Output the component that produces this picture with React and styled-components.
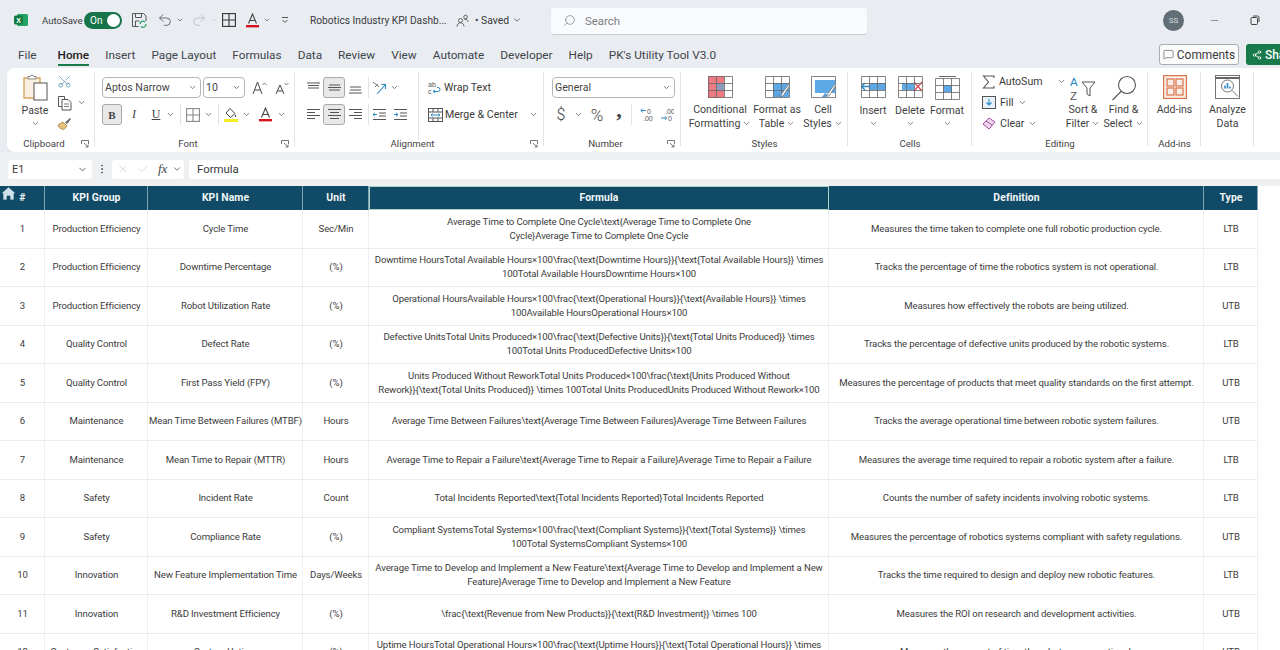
import styled, { createGlobalStyle } from "styled-components";
import { ChevronDown, Search, Scissors, Undo2, Redo2, X, Check, Minus, MessageSquare, Share2, MoreVertical } from "lucide-react";

const rows = [
  ["1", "Production Efficiency", "Cycle Time", "Sec/Min", String.raw`Average Time to Complete One Cycle\text{Average Time to Complete One
Cycle}Average Time to Complete One Cycle`, "Measures the time taken to complete one full robotic production cycle.", "LTB"],
  ["2", "Production Efficiency", "Downtime Percentage", "(%)", String.raw`Downtime HoursTotal Available Hours×100\frac{\text{Downtime Hours}}{\text{Total Available Hours}} \times
100Total Available HoursDowntime Hours×100`, "Tracks the percentage of time the robotics system is not operational.", "LTB"],
  ["3", "Production Efficiency", "Robot Utilization Rate", "(%)", String.raw`Operational HoursAvailable Hours×100\frac{\text{Operational Hours}}{\text{Available Hours}} \times
100Available HoursOperational Hours×100`, "Measures how effectively the robots are being utilized.", "UTB"],
  ["4", "Quality Control", "Defect Rate", "(%)", String.raw`Defective UnitsTotal Units Produced×100\frac{\text{Defective Units}}{\text{Total Units Produced}} \times
100Total Units ProducedDefective Units×100`, "Tracks the percentage of defective units produced by the robotic systems.", "LTB"],
  ["5", "Quality Control", "First Pass Yield (FPY)", "(%)", String.raw`Units Produced Without ReworkTotal Units Produced×100\frac{\text{Units Produced Without
Rework}}{\text{Total Units Produced}} \times 100Total Units ProducedUnits Produced Without Rework×100`, "Measures the percentage of products that meet quality standards on the first attempt.", "UTB"],
  ["6", "Maintenance", "Mean Time Between Failures (MTBF)", "Hours", String.raw`Average Time Between Failures\text{Average Time Between Failures}Average Time Between Failures`, "Tracks the average operational time between robotic system failures.", "UTB"],
  ["7", "Maintenance", "Mean Time to Repair (MTTR)", "Hours", String.raw`Average Time to Repair a Failure\text{Average Time to Repair a Failure}Average Time to Repair a Failure`, "Measures the average time required to repair a robotic system after a failure.", "LTB"],
  ["8", "Safety", "Incident Rate", "Count", String.raw`Total Incidents Reported\text{Total Incidents Reported}Total Incidents Reported`, "Counts the number of safety incidents involving robotic systems.", "LTB"],
  ["9", "Safety", "Compliance Rate", "(%)", String.raw`Compliant SystemsTotal Systems×100\frac{\text{Compliant Systems}}{\text{Total Systems}} \times
100Total SystemsCompliant Systems×100`, "Measures the percentage of robotics systems compliant with safety regulations.", "UTB"],
  ["10", "Innovation", "New Feature Implementation Time", "Days/Weeks", String.raw`Average Time to Develop and Implement a New Feature\text{Average Time to Develop and Implement a New
Feature}Average Time to Develop and Implement a New Feature`, "Tracks the time required to design and deploy new robotic features.", "LTB"],
  ["11", "Innovation", "R&D Investment Efficiency", "(%)", String.raw`\frac{\text{Revenue from New Products}}{\text{R&D Investment}} \times 100`, "Measures the ROI on research and development activities.", "UTB"],
  ["12", "Customer Satisfaction", "System Uptime", "(%)", String.raw`Uptime HoursTotal Operational Hours×100\frac{\text{Uptime Hours}}{\text{Total Operational Hours}} \times
100Total Operational HoursUptime Hours×100`, "Measures the amount of time the robots are operational.", "UTB"],
];

const heads = ["#", "KPI Group", "KPI Name", "Unit", "Formula", "Definition", "Type"];

const tabs = ["File", "Home", "Insert", "Page Layout", "Formulas", "Data", "Review", "View", "Automate", "Developer", "Help", "PK's Utility Tool V3.0"];

const Global = createGlobalStyle`
  html, body { margin: 0; height: 650px; overflow: hidden; background: #e9edf2; }
  * { box-sizing: border-box; }
  #root { font-family: Roboto, "Noto Sans", sans-serif; color: #3a3a3a; }
`;

const Page = styled.div`
  width: 1280px;
  height: 650px;
  overflow: hidden;
  display: flex;
  flex-direction: column;
`;

/* title bar */
const TitleBar = styled.div`
  height: 40px;
  display: flex;
  align-items: center;
  padding-left: 14px;
  flex: none;
`;
const AutoSave = styled.span`
  font-size: 9.6px;
  margin-left: 14px;
  width: 42px;
`;
const Toggle = styled.div`
  width: 38px;
  height: 17px;
  border-radius: 9px;
  background: #17744a;
  color: #fff;
  font-size: 10px;
  display: flex;
  align-items: center;
  justify-content: space-between;
  padding: 0 2px 0 6px;
  &::after {
    content: "";
    width: 13px;
    height: 13px;
    border-radius: 50%;
    background: #fff;
  }
`;
const Quick = styled.div`
  display: flex;
  align-items: center;
  margin-left: ${p => p.$left || 0}px;
  color: ${p => p.$dim ? "#b4b8bd" : "#47505a"};
`;
const DocTitle = styled.span`
  font-size: 10.2px;
  margin-left: 21px;
  width: 146px;
  white-space: nowrap;
`;
const Saved = styled.span`
  font-size: 10.4px;
  margin-left: 6px;
  width: 48px;
  display: flex;
  align-items: center;
  gap: 3px;
  white-space: nowrap;
`;
const SearchBox = styled.div`
  width: 316px;
  height: 26px;
  margin-left: 28px;
  margin-top: 2px;
  background: #f9fafb;
  border-radius: 3px;
  box-shadow: 0 1px 1px #c9ccd2;
  display: flex;
  align-items: center;
  padding: 0 0 1px 12px;
  gap: 9px;
  font-size: 11.4px;
  color: #7c7f84;
`;
const Avatar = styled.div`
  width: 21px;
  height: 21px;
  border-radius: 50%;
  background: #616e75;
  color: #d8dcdf;
  font-size: 8px;
  display: flex;
  align-items: center;
  justify-content: center;
  margin-left: auto;
`;
const WinBtn = styled.div`
  margin-left: ${p => p.$left}px;
  display: flex;
  color: #444;
`;

/* tabs */
const TabRow = styled.div`
  height: 28px;
  display: flex;
  align-items: flex-start;
  padding-left: 18px;
  gap: 16px;
  flex: none;
`;
const Tab = styled.span`
  font-size: 11.8px;
  height: 26px;
  line-height: 30px;
  white-space: nowrap;
  color: ${p => p.$active ? "#222" : "#3f444a"};
  font-weight: ${p => p.$active ? 500 : 400};
  margin-left: ${p => p.$active ? 5 : 0}px;
  border-bottom: ${p => p.$active ? "2px solid #1b7a4c" : "none"};
`;
const CommentBtn = styled.div`
  margin: 4px 0 0 auto;
  width: 80px;
  height: 21px;
  border: 1px solid #a9adb3;
  border-radius: 3px;
  background: #fbfbfc;
  display: flex;
  align-items: center;
  justify-content: center;
  gap: 3px;
  font-size: 11.9px;
`;
const ShareBtn = styled.div`
  width: 50px;
  height: 21px;
  margin: 4px -16px 0 -9px;
  background: #187a4a;
  border-radius: 3px;
  color: #fff;
  display: flex;
  align-items: center;
  padding-left: 6px;
  gap: 3px;
  font-size: 11.9px;
  font-weight: 500;
`;

/* ribbon */
const Ribbon = styled.div`
  height: 84px;
  margin-left: 7px;
  background: #fff;
  border-radius: 7px 0 0 7px;
  display: flex;
  flex: none;
  box-shadow: 0 1px 1px #d6d8dc;
`;
const Group = styled.div`
  width: ${p => p.$w}px;
  flex: none;
  position: relative;
  display: grid;
  grid-template-rows: 1fr 16px;
  &::after {
    content: "";
    position: absolute;
    right: 0;
    top: 4px;
    bottom: 6px;
    width: 1px;
    background: #e4e5e7;
  }
`;
const GroupBody = styled.div`
  display: flex;
  padding-left: ${p => p.$left || 0}px;
  min-height: 0;
`;
const GroupFoot = styled.div`
  display: grid;
  grid-template-columns: 1fr auto 1fr;
  align-items: center;
  font-size: 9.7px;
  color: #444;
  padding-bottom: 1px;
  padding-right: ${p => p.$launch ? 14 : 0}px;
`;
const FootLabel = styled.span`
  grid-column: 2;
`;
const Launcher = styled.svg`
  grid-column: 3;
  justify-self: end;
  width: 8px;
  height: 8px;
  margin-right: -8px;
`;
const Stack = styled.div`
  display: flex;
  flex-direction: column;
  align-items: ${p => p.$align || "flex-start"};
  flex: none;
  width: ${p => p.$w ? p.$w + "px" : "auto"};
  gap: ${p => p.$gap || 0}px;
  padding-top: ${p => p.$top || 0}px;
  margin-left: ${p => p.$left || 0}px;
`;
const Line = styled.div`
  display: flex;
  align-items: center;
  height: ${p => p.$h || 21}px;
  gap: ${p => p.$gap || 0}px;
  font-size: 10.6px;
  white-space: nowrap;
`;
const Big = styled.div`
  width: ${p => p.$w}px;
  flex: none;
  display: flex;
  flex-direction: column;
  align-items: center;
  padding-top: ${p => p.$top ?? 8}px;
  font-size: 10.6px;
  line-height: 14px;
  text-align: center;
  color: #3f3f3f;
  white-space: pre;
`;
const BigIcon = styled.div`
  height: ${p => p.$h || 24}px;
  margin-bottom: ${p => p.$gap ?? 3}px;
  display: flex;
  align-items: flex-start;
`;
const Chev = styled(ChevronDown).attrs(p => ({ size: p.$s || 9, strokeWidth: 2 }))`
  color: #555;
  flex: none;
  margin-left: ${p => p.$left || 0}px;
  margin-top: ${p => p.$top || 0}px;
`;
const InlineChev = styled(Chev)`
  vertical-align: -1px;
`;
const Select = styled.div`
  width: ${p => p.$w}px;
  height: 21px;
  border: 1px solid #b5b6b8;
  border-radius: 4px;
  display: flex;
  align-items: center;
  justify-content: space-between;
  padding: 0 3px 0 2px;
  font-size: 10.6px;
  color: #444;
  margin-left: ${p => p.$left || 0}px;
`;
const ToolBtn = styled.div`
  width: ${p => p.$w || 20}px;
  height: 21px;
  border-radius: 3px;
  display: flex;
  align-items: center;
  justify-content: center;
  flex: none;
  margin-left: ${p => p.$left || 0}px;
  padding-bottom: ${p => p.$up || 0}px;
  font-size: ${p => p.$size || 11}px;
  font-family: ${p => p.$sans ? "Roboto, sans-serif" : '"Liberation Serif", serif'};
  font-style: ${p => p.$italic ? "italic" : "normal"};
  font-weight: ${p => p.$bold ? 700 : p.$sans ? 300 : 400};
  text-decoration: ${p => p.$under ? "underline" : "none"};
  background: ${p => p.$on ? "#e8e8e8" : "transparent"};
  border: 1px solid ${p => p.$on ? "#a8a8a8" : "transparent"};
  color: #444;
`;
const VSep = styled.div`
  width: 1px;
  height: ${p => p.$h || 21}px;
  background: ${p => p.$clear ? "transparent" : "#e2e3e5"};
  margin: ${p => p.$top || 0}px ${p => p.$m || 5}px 0;
  flex: none;
`;

/* formula bar */
const FormulaBar = styled.div`
  height: 34px;
  flex: none;
  display: flex;
  align-items: center;
  padding-left: 8px;
  background: #eef0f2;
`;
const NameBox = styled.div`
  width: 84px;
  height: 19px;
  background: #fff;
  border-radius: 3px;
  display: flex;
  align-items: center;
  justify-content: space-between;
  padding: 0 4px;
  font-size: 10.8px;
`;
const Dots = styled.div`
  width: 20px;
  display: flex;
  justify-content: center;
  color: #555;
`;
const FxBox = styled.div`
  width: 72px;
  height: 19px;
  background: #fff;
  border-radius: 3px;
  display: flex;
  align-items: center;
  padding-left: 5px;
  gap: 8px;
  color: #c2c4c7;
`;
const Fx = styled.span`
  font-family: "Liberation Serif", serif;
  font-style: italic;
  font-size: 13px;
  color: #444;
  margin-left: 1px;
`;
const FormulaInput = styled.div`
  flex: 1;
  height: 19px;
  margin-left: 5px;
  background: #fff;
  border-radius: 3px 0 0 3px;
  display: flex;
  align-items: center;
  padding-left: 8px;
  font-size: 11.4px;
`;

/* sheet */
const Sheet = styled.div`
  flex: 1;
  background: #fff;
  position: relative;
  min-height: 0;
  overflow: hidden;
`;
const Row = styled.div`
  display: grid;
  grid-template-columns: 45px 103px 155px 66px 460px 375px 54px;
  width: 1258px;
  height: ${p => p.$h}px;
`;
const HeadCell = styled.div`
  background: #114a66;
  color: #f2f6f8;
  font-size: 10.4px;
  font-weight: 700;
  letter-spacing: 0.1px;
  display: flex;
  align-items: center;
  justify-content: center;
  padding: 0 0 1px 1px;
  border-right: 1px solid #7fa5b8;
  ${p => p.$selected && "outline: 1px solid #a9d3c2; outline-offset: -1px;"}
`;
const Cell = styled.div`
  font-size: 9.6px;
  letter-spacing: -0.13px;
  line-height: 14px;
  color: #3c3c3c;
  display: flex;
  align-items: center;
  justify-content: center;
  text-align: center;
  white-space: pre;
  padding-left: 1px;
  border-right: 1px solid #f0f0f0;
  border-bottom: 1px solid #ececec;
`;
const HomeBadge = styled.svg`
  position: absolute;
  left: 1px;
  top: 1px;
  width: 15px;
  height: 14px;
`;

/* drawings */
const ExcelLogo = () => (
  <svg width="14" height="14" viewBox="0 0 14 14">
    <rect x="3" y="1" width="11" height="12" rx="1.5" fill="#21a366" />
    <rect x="0" y="2.5" width="9" height="9" rx="1.5" fill="#107c41" />
    <text x="2.2" y="9.6" fontSize="7" fontWeight="700" fill="#fff" fontFamily="Liberation Sans">X</text>
  </svg>
);
const SaveIcon = () => (
  <svg width="17" height="17" viewBox="0 0 17 17" fill="none" stroke="#555" strokeWidth="1">
    <path d="M1.5 1.5h11l2.5 2.5v5M1.5 1.5v13h6" />
    <path d="M4.5 1.5v4h6v-4M4.5 14v-5h4" />
    <path d="M9 12a3 3 0 0 1 5-2M15 12a3 3 0 0 1-5 2.5" stroke="#2f9e62" strokeWidth="1.3" />
  </svg>
);
const GridIcon = ({ s = 14, c = "#333" }) => (
  <svg width={s} height={s} viewBox="0 0 14 14" fill="none" stroke={c} strokeWidth="1.1">
    <rect x="0.6" y="0.6" width="12.8" height="12.8" />
    <path d="M7 .6v12.8M.6 7h12.8" />
  </svg>
);
const FontColor = () => (
  <svg width="15" height="15" viewBox="0 0 15 15" fill="none">
    <path d="M3.5 10.5 7.5 1l4 9.5M5 7.5h5" stroke="#444" strokeWidth="1.1" />
    <rect x="1" y="12" width="13" height="2.4" fill="#d3141c" />
  </svg>
);
const Customize = () => (
  <svg width="8" height="8" viewBox="0 0 8 8" fill="none" stroke="#555">
    <path d="M1 1.5h6M1.5 4 4 6.5 6.5 4" />
  </svg>
);
const People = () => (
  <svg width="13" height="13" viewBox="0 0 13 13" fill="none" stroke="#555" strokeWidth=".9">
    <circle cx="4.5" cy="6.5" r="2" /><path d="M1 12.5c0-5 7-5 7 0" />
    <circle cx="9.5" cy="3" r="1.8" /><path d="M8.5 5.5c2-.6 3.5.5 3.5 2.5" />
  </svg>
);
const Restore = () => (
  <svg width="10" height="10" viewBox="0 0 10 10" fill="none" stroke="#444" strokeWidth="1">
    <rect x="1" y="2.5" width="6.5" height="7" rx="1" /><path d="M3 1h4.5A1.5 1.5 0 0 1 9 2.5V7" />
  </svg>
);
const PasteIcon = () => (
  <svg width="26" height="27" viewBox="0 0 26 27" fill="none">
    <path d="M2 4h16v20H2z" fill="#f8f1e2" stroke="#d6a760" strokeWidth="1.4" />
    <path d="M6 5V2.5h2.5a1.5 1.5 0 0 1 3 0H14V5z" fill="#fff" stroke="#888" />
    <rect x="12" y="9" width="13" height="17" fill="#fff" stroke="#555" />
  </svg>
);
const CopyIcon = () => (
  <svg width="16" height="16" viewBox="0 0 16 16" fill="none" stroke="#555">
    <path d="M5 11.5H1.5v-10h6V4" /><path d="M5 4.5h6l3 3v7.5H5z" /><path d="M7 9h5M7 11.5h5" strokeWidth=".8" />
  </svg>
);
const Brush = () => (
  <svg width="15" height="13" viewBox="0 0 15 13" fill="none">
    <path d="M1 8l5-3 4 4-3 3.5C5 12 2 12 1 8z" fill="#e8c27d" stroke="#a07c3e" strokeWidth=".8" />
    <path d="M8 5.5 13 1l1 1-4 5z" fill="#666" />
  </svg>
);
const ABig = ({ small }) => (
  <svg width="15" height="14" viewBox="0 0 15 14" fill="none">
    <path d={small ? "M2 13 6 4l4 9M3.5 10h5" : "M1 13 5.5 1 10 13M2.8 9h5.4"} stroke="#444" strokeWidth="1" />
    <path d={small ? "M10.5 2 12.5 4l2-2" : "M10.5 4l2-2 2 2"} stroke="#555" strokeWidth=".8" />
  </svg>
);
const Fill = () => (
  <svg width="14" height="15" viewBox="0 0 14 15" fill="none">
    <path d="M6 1.5 11 6.5 6.5 10.5 2 6z" stroke="#444" /><path d="M11.5 7.5c1 1.5 1 2.5 0 2.5s-1-1 0-2.5z" fill="#444" />
    <rect y="12" width="14" height="3" fill="#f4ed27" />
  </svg>
);
const Bars = ({ d }) => (
  <svg width="15" height="13" viewBox="0 0 15 13" stroke="#555" strokeWidth="1" fill="none"><path d={d} /></svg>
);
const Orient = () => (
  <svg width="15" height="14" viewBox="0 0 15 14" fill="none">
    <path d="M1 1l6 5M3 6l3-3" stroke="#777" strokeWidth="1" />
    <path d="M5 13 13 4M9.5 3.5H13.5V8" stroke="#2a8ac5" strokeWidth="1.1" />
  </svg>
);
const Indent = ({ out }) => (
  <svg width="15" height="13" viewBox="0 0 15 13" fill="none" stroke="#555">
    <path d="M1 1.5h13M7 5h7M7 8h7M1 11.5h13" />
    <path d={out ? "M5 6.5H1M2.8 4.8 1 6.5l1.8 1.7" : "M1 6.5h4M3.2 4.8 5 6.5 3.2 8.2"} stroke="#2a8ac5" />
  </svg>
);
const WrapIcon = () => (
  <svg width="14" height="14" viewBox="0 0 14 14" fill="none">
    <text x="0" y="6" fontSize="7" fill="#555" fontFamily="Liberation Sans">ab</text>
    <text x="0" y="13" fontSize="7" fill="#555" fontFamily="Liberation Sans">c</text>
    <path d="M5 10.5h5a2 2 0 0 0 0-4H9M7 8.8 5 10.5l2 1.7" stroke="#2a8ac5" />
  </svg>
);
const MergeIcon = () => (
  <svg width="15" height="14" viewBox="0 0 15 14" fill="none" stroke="#555">
    <rect x=".5" y=".5" width="14" height="13" />
    <path d="M.5 4h14M.5 10h14M5 .5V4M10 .5V4M5 10v3.5M10 10v3.5" />
    <path d="M3 7h9M4.5 5.5 3 7l1.5 1.5M10.5 5.5 12 7l-1.5 1.5" stroke="#2a8ac5" />
  </svg>
);
const DecIcon = ({ inc }) => (
  <svg width="14" height="15" viewBox="0 0 14 15" fill="none">
    <text x={inc ? 7 : 5} y="6.5" fontSize="7" fill="#555" fontFamily="Liberation Sans">{inc ? "0" : ".00"}</text>
    <text x={inc ? 3 : 8} y="14" fontSize="7" fill="#555" fontFamily="Liberation Sans">{inc ? ".00" : "0"}</text>
    <path d={inc ? "M6 3.5H1M2.6 1.8.8 3.5l1.8 1.7" : "M1 11h5.5M4.9 9.3 6.7 11l-1.8 1.7"} stroke="#2a8ac5" />
  </svg>
);
const SheetIcon = ({ children }) => (
  <svg width="25" height="22" viewBox="0 0 25 22" fill="none">
    {children}
    <path d="M.5 .5h24v21H.5zM.5 7.5h24M.5 14.5h24M8.5 .5v21M16.5 .5v21" stroke="#666" strokeWidth=".8" />
  </svg>
);
const CondFmt = () => (
  <SheetIcon>
    <path d="M0 0h16v7h-8v7h8v8H0z" fill="#ee7b81" />
    <rect x="8" y="7" width="8" height="7" fill="#8b9bc0" />
  </SheetIcon>
);
const BrushTail = () => (
  <>
    <path d="M15 20l9-12 1 1-7 11z" fill="#fff" stroke="#777" strokeWidth=".8" />
    <path d="M11 21l3-4 3 2-2 2z" fill="#5d9bd5" />
  </>
);
const FmtTable = () => (
  <svg width="25" height="24" viewBox="0 0 25 24" fill="none">
    <rect x="8" y="7" width="16" height="14" fill="#5da8e6" />
    <path d="M.5 .5h24v21H.5zM.5 7.5h24M.5 14.5h24M8.5 .5v21M16.5 .5v21" stroke="#666" strokeWidth=".8" />
    <BrushTail />
  </svg>
);
const CellStyles = () => (
  <svg width="25" height="24" viewBox="0 0 25 24" fill="none">
    <rect x="4" y="4" width="20" height="13" fill="#5da8e6" />
    <path d="M.5 .5h24v21H.5z" stroke="#666" strokeWidth=".8" />
    <BrushTail />
  </svg>
);
const InsertIcon = () => (
  <SheetIcon>
    <rect x="8" y="7" width="17" height="7" fill="#5da8e6" />
    <path d="M8 10.5H0M4 7 .5 10.5 4 14" stroke="#2a8ac5" strokeWidth="1.3" />
  </SheetIcon>
);
const DeleteIcon = () => (
  <SheetIcon>
    <rect x="4" y="7" width="12" height="7" fill="#5da8e6" />
    <path d="M16 6l8 9M24 6l-8 9" stroke="#e2474f" strokeWidth="1.2" />
  </SheetIcon>
);
const FormatIcon = () => (
  <svg width="25" height="24" viewBox="0 0 25 24" fill="none">
    <rect x="8" y="9" width="9" height="7" fill="#5da8e6" />
    <path d="M4 .5h17" stroke="#666" />
    <path d="M.5 2.5h24v21H.5zM.5 9.5h24M.5 16.5h24M8.5 2.5v21M16.5 2.5v21" stroke="#666" strokeWidth=".8" />
  </svg>
);
const Sum = () => (
  <svg width="13" height="14" viewBox="0 0 13 14" fill="none" stroke="#555" strokeWidth="1.1">
    <path d="M12 3V1H1.5l5 6-5 6H12v-2" />
  </svg>
);
const FillDown = () => (
  <svg width="14" height="13" viewBox="0 0 14 13" fill="none">
    <rect x=".5" y=".5" width="13" height="12" stroke="#555" fill="#e8f1fa" />
    <path d="M7 3v6M4.5 6.5 7 9l2.5-2.5" stroke="#2a8ac5" strokeWidth="1.1" />
  </svg>
);
const Eraser = () => (
  <svg width="14" height="13" viewBox="0 0 14 13" fill="none">
    <path d="M1 7l6-6 6 4-6 7z" fill="#f0d7ee" stroke="#a24aa0" />
    <path d="M4 4l6 4" stroke="#a24aa0" />
  </svg>
);
const SortIcon = () => (
  <svg width="26" height="26" viewBox="0 0 26 26" fill="none">
    <text x="0" y="11" fontSize="11.5" fill="#2a8ac5" fontFamily="Liberation Sans">A</text>
    <text x="0" y="25" fontSize="11.5" fill="#555" fontFamily="Liberation Sans">Z</text>
    <path d="M12 7h13l-5 6v8l-3-2v-6z" stroke="#555" />
  </svg>
);
const FindIcon = () => (
  <svg width="26" height="26" viewBox="0 0 26 26" fill="none" stroke="#555" strokeWidth="1.1">
    <circle cx="16" cy="10" r="8.5" /><path d="M10 16.5 1.5 25" />
  </svg>
);
const AddIns = () => (
  <svg width="24" height="24" viewBox="0 0 24 24" fill="#fbeee6" stroke="#d9764a" strokeWidth="1.2">
    <rect x=".6" y=".6" width="22.8" height="22.8" />
    <rect x="4" y="4" width="7" height="7" /><rect x="13" y="4" width="7" height="7" />
    <rect x="4" y="13" width="7" height="7" /><rect x="13" y="13" width="7" height="7" />
  </svg>
);
const Analyze = () => (
  <svg width="25" height="24" viewBox="0 0 25 24" fill="none" stroke="#666" strokeWidth=".9">
    <rect x=".5" y=".5" width="24" height="23" />
    <path d="M.5 3h24" strokeWidth="2" />
    <circle cx="12.5" cy="11" r="6" fill="#fff" />
    <path d="M17 15.5l6 6" />
    <path d="M10 13.5v-3M12.5 13.5V8M15 13.5v-2" stroke="#2a8ac5" strokeWidth="1.6" />
  </svg>
);
const Launch = () => (
  <Launcher viewBox="0 0 8 8" fill="none" stroke="#666" strokeWidth=".9">
    <path d="M.5 4V.5H7.5V4M3 3l4 4M7 4.5V7H4.5" />
  </Launcher>
);

const TOP = "M1 2h13M2 4.5h11M2 7h11";
const MID = "M2 4h11M1 6.5h13M2 9h11";
const BOT = "M2 6h11M2 9h11M1 12h13";
const LEFT = "M1 1.5h13M1 4.5h8M1 7.5h13M1 10.5h8";
const CENTER = "M1 1.5h13M3 4.5h9M1 7.5h13M3 10.5h9";
const RIGHT = "M1 1.5h13M6 4.5h8M1 7.5h13M6 10.5h8";

export default function App() {
  return (
    <Page>
      <Global />
      <TitleBar>
        <ExcelLogo />
        <AutoSave>AutoSave</AutoSave>
        <Toggle>On</Toggle>
        <Quick $left={9}><SaveIcon /></Quick>
        <Quick $left={9}><Undo2 size={16} strokeWidth={1.2} /><Chev $left={3} $s={8} /></Quick>
        <Quick $left={7} $dim><Redo2 size={16} strokeWidth={1.2} /><Chev $left={3} $s={8} style={{ color: "#c4c7cb" }} /></Quick>
        <Quick $left={4}><GridIcon /></Quick>
        <Quick $left={9}><FontColor /><Chev $left={3} $s={8} /></Quick>
        <Quick $left={10}><Customize /></Quick>
        <DocTitle>Robotics Industry KPI Dashb...</DocTitle>
        <People />
        <Saved>• Saved <Chev $s={10} /></Saved>
        <SearchBox><Search size={13} strokeWidth={1.3} style={{ transform: "scaleX(-1)" }} />Search</SearchBox>
        <Avatar>SS</Avatar>
        <WinBtn $left={25}><Minus size={11} strokeWidth={1.2} /></WinBtn>
        <WinBtn $left={30}><Restore /></WinBtn>
        <WinBtn $left={20} />
      </TitleBar>

      <TabRow>
        {tabs.map(t => <Tab key={t} $active={t === "Home"}>{t}</Tab>)}
        <CommentBtn><MessageSquare size={11} strokeWidth={1.2} />Comments</CommentBtn>
        <ShareBtn><Share2 size={10} />Share</ShareBtn>
      </TabRow>

      <Ribbon>
        <Group $w={88}>
          <GroupBody $left={14}>
            <Big $w={28} $top={6}>
              <BigIcon $h={27} $gap={3}><PasteIcon /></BigIcon>
              Paste
              <Chev $top={1} />
            </Big>
            <Stack $left={8} $top={3}>
              <Line><Scissors size={15} strokeWidth={1} color="#3b7ea8" style={{ transform: "rotate(-90deg)" }} /></Line>
              <Line><CopyIcon /><Chev $left={4} /></Line>
              <Line><Brush /></Line>
            </Stack>
          </GroupBody>
          <GroupFoot $launch><FootLabel>Clipboard</FootLabel><Launch /></GroupFoot>
        </Group>

        <Group $w={200}>
          <Stack $left={7} $top={9} $gap={6}>
            <Line>
              <Select $w={99}>Aptos Narrow<Chev /></Select>
              <Select $w={42} $left={2}>10<Chev /></Select>
              <ToolBtn $w={20} $left={4}><ABig /></ToolBtn>
              <ToolBtn $w={20} $left={2}><ABig small /></ToolBtn>
            </Line>
            <Line>
              <ToolBtn $on $bold $size={11}>B</ToolBtn>
              <ToolBtn $italic $left={2} $size={12}>I</ToolBtn>
              <ToolBtn $under $left={2} $size={12}>U</ToolBtn>
              <Chev />
              <VSep />
              <GridIcon c="#8a8a8a" />
              <Chev $left={4} />
              <VSep />
              <Fill />
              <Chev $left={4} />
              <VSep $m={3} $clear />
              <FontColor />
              <Chev $left={4} />
            </Line>
          </Stack>
          <GroupFoot $launch><FootLabel>Font</FootLabel><Launch /></GroupFoot>
        </Group>

        <Group $w={249}>
          <GroupBody $left={8}>
            <Stack $top={9} $gap={6}>
              <Line>
                <ToolBtn><Bars d={TOP} /></ToolBtn>
                <ToolBtn $on $w={22}><Bars d={MID} /></ToolBtn>
                <ToolBtn><Bars d={BOT} /></ToolBtn>
                <VSep $m={3} />
                <Orient /><Chev $left={3} />
              </Line>
              <Line>
                <ToolBtn><Bars d={LEFT} /></ToolBtn>
                <ToolBtn $on $w={22}><Bars d={CENTER} /></ToolBtn>
                <ToolBtn><Bars d={RIGHT} /></ToolBtn>
                <VSep $m={3} />
                <Indent out /><Quick $left={6}><Indent /></Quick>
              </Line>
            </Stack>
            <VSep $h={68} $m={9.5} $top={4} />
            <Stack $top={9} $gap={6}>
              <Line $gap={2}><WrapIcon />Wrap Text</Line>
              <Line $gap={2}><MergeIcon />Merge &amp; Center<Chev $left={9} /></Line>
            </Stack>
          </GroupBody>
          <GroupFoot $launch><FootLabel>Alignment</FootLabel><Launch /></GroupFoot>
        </Group>

        <Group $w={137}>
          <Stack $left={8} $top={9} $gap={6}>
            <Select $w={123}>General<Chev /></Select>
            <Line>
              <ToolBtn $w={18} $size={16} $sans>$</ToolBtn>
              <Chev $left={4} />
              <ToolBtn $w={20} $left={4} $size={17} $sans>%</ToolBtn>
              <ToolBtn $w={16} $left={4} $size={22} $bold $up={9}>,</ToolBtn>
              <VSep $m={4} />
              <ToolBtn $w={18} $left={2}><DecIcon inc /></ToolBtn>
              <ToolBtn $w={20} $left={1}><DecIcon /></ToolBtn>
            </Line>
          </Stack>
          <GroupFoot $launch><FootLabel>Number</FootLabel><Launch /></GroupFoot>
        </Group>

        <Group $w={167}>
          <GroupBody $left={5}>
            <Big $w={68}><BigIcon><CondFmt /></BigIcon>Conditional<span>Formatting<InlineChev $left={2} /></span></Big>
            <Big $w={46}><BigIcon><FmtTable /></BigIcon>Format as<span>Table<InlineChev $left={2} /></span></Big>
            <Big $w={46}><BigIcon><CellStyles /></BigIcon>Cell<span>Styles<InlineChev $left={2} /></span></Big>
          </GroupBody>
          <GroupFoot><FootLabel>Styles</FootLabel></GroupFoot>
        </Group>

        <Group $w={124}>
          <GroupBody $left={7}>
            <Big $w={36}><BigIcon $gap={4}><InsertIcon /></BigIcon>Insert<Chev $top={1} /></Big>
            <Big $w={38}><BigIcon $gap={4}><DeleteIcon /></BigIcon>Delete<Chev $top={1} /></Big>
            <Big $w={36}><BigIcon $gap={4}><FormatIcon /></BigIcon>Format<Chev $top={1} /></Big>
          </GroupBody>
          <GroupFoot><FootLabel>Cells</FootLabel></GroupFoot>
        </Group>

        <Group $w={176}>
          <GroupBody $left={10}>
            <Stack $top={3} $w={79}>
              <Line $gap={4}><Sum />AutoSum<Chev $left={10} /></Line>
              <Line $gap={4}><FillDown />Fill<Chev /></Line>
              <Line $gap={4}><Eraser />Clear<Chev /></Line>
            </Stack>
            <Big $w={44} $top={7}><BigIcon $h={26} $gap={2}><SortIcon /></BigIcon>Sort &amp;<span>Filter<InlineChev $left={2} /></span></Big>
            <Big $w={37} $top={7}><BigIcon $h={26} $gap={2}><FindIcon /></BigIcon>Find &amp;<span>Select<InlineChev $left={2} /></span></Big>
          </GroupBody>
          <GroupFoot><FootLabel>Editing</FootLabel></GroupFoot>
        </Group>

        <Group $w={53}>
          <GroupBody><Big $w={53} $top={7} ><BigIcon $gap={4}><AddIns /></BigIcon>Add-ins</Big></GroupBody>
          <GroupFoot><FootLabel>Add-ins</FootLabel></GroupFoot>
        </Group>

        <Group $w={53}>
          <GroupBody><Big $w={53} $top={7}><BigIcon $gap={4}><Analyze /></BigIcon>Analyze<span>Data</span></Big></GroupBody>
        </Group>
      </Ribbon>

      <FormulaBar>
        <NameBox>E1<Chev $s={11} /></NameBox>
        <Dots><MoreVertical size={12} /></Dots>
        <FxBox><X size={12} strokeWidth={1.2} /><Check size={12} strokeWidth={1.2} /><Fx>fx</Fx><Chev $s={10} $left={-3} /></FxBox>
        <FormulaInput>Formula</FormulaInput>
      </FormulaBar>

      <Sheet>
        <Row $h={24}>
          {heads.map(h => <HeadCell key={h} $selected={h === "Formula"}>{h}</HeadCell>)}
        </Row>
        {rows.map(r => (
          <Row key={r[0]} $h={38.5}>
            {r.map((c, i) => <Cell key={i}>{c}</Cell>)}
          </Row>
        ))}
        <HomeBadge viewBox="0 0 15 14" fill="#cfe2ea" stroke="#114a66" strokeWidth=".7">
          <path d="M7.5 0 15 6.5h-2V13H9V9H6v4H2V6.5H0z" />
        </HomeBadge>
      </Sheet>
    </Page>
  );
}
